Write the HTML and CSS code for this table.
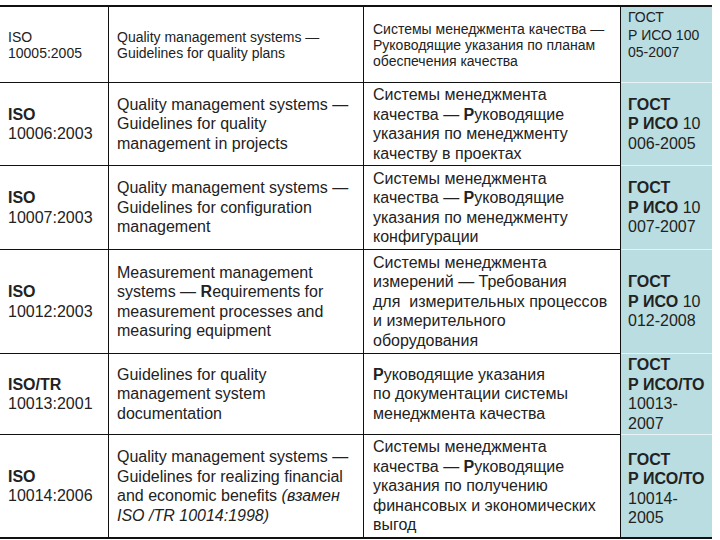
FILE: index.html
```html
<!DOCTYPE html>
<html>
<head>
<meta charset="utf-8">
<link rel="stylesheet" href="styles.css">
</head>
<body>
<table class="std">
  <colgroup>
    <col class="c1"><col class="c2"><col class="c3"><col class="c4">
  </colgroup>
  <tr class="r1 small">
    <td>ISO<br>10005:2005</td>
    <td>Quality management systems —<br>Guidelines for quality plans</td>
    <td>Системы менеджмента качества —<br>Руководящие указания по планам<br>обеспечения качества</td>
    <td class="gost gost-top">ГОСТ<br>Р ИСО 100<br>05-2007</td>
  </tr>
  <tr class="r2">
    <td><b>ISO</b><br>10006:2003</td>
    <td>Quality management systems —<br>Guidelines for quality<br>management in projects</td>
    <td>Системы менеджмента<br>качества — <b>Р</b>уководящие<br>указания по менеджменту<br>качеству в проектах</td>
    <td class="gost"><b>ГОСТ</b><br><b>Р ИСО</b> 10<br>006-2005</td>
  </tr>
  <tr class="r3">
    <td><b>ISO</b><br>10007:2003</td>
    <td>Quality management systems —<br>Guidelines for configuration<br>management</td>
    <td>Системы менеджмента<br>качества — <b>Р</b>уководящие<br>указания по менеджменту<br>конфигурации</td>
    <td class="gost"><b>ГОСТ</b><br><b>Р ИСО</b> 10<br>007-2007</td>
  </tr>
  <tr class="r4">
    <td><b>ISO</b><br>10012:2003</td>
    <td>Measurement management<br>systems — <b>R</b>equirements for<br>measurement processes and<br>measuring equipment</td>
    <td>Системы менеджмента<br>измерений — Требования<br>для&nbsp; измерительных процессов<br>и измерительного<br>оборудования</td>
    <td class="gost"><b>ГОСТ</b><br><b>Р ИСО</b> 10<br>012-2008</td>
  </tr>
  <tr class="r5">
    <td><b>ISO/TR</b><br>10013:2001</td>
    <td>Guidelines for quality<br>management system<br>documentation</td>
    <td><b>Р</b>уководящие указания<br>по документации системы<br>менеджмента качества</td>
    <td class="gost"><b>ГОСТ</b><br><b>Р ИСО/ТО</b><br>10013-<br>2007</td>
  </tr>
  <tr class="r6 last">
    <td><b>ISO</b><br>10014:2006</td>
    <td>Quality management systems —<br>Guidelines for realizing financial<br>and economic benefits <i>(взамен</i><br><i>ISO /TR 10014:1998)</i></td>
    <td>Системы менеджмента<br>качества — <b>Р</b>уководящие<br>указания по получению<br>финансовых и экономических<br>выгод</td>
    <td class="gost gost-low"><b>ГОСТ</b><br><b>Р ИСО/ТО</b><br>10014-<br>2005</td>
  </tr>
</table>
</body>
</html>
```

FILE: styles.css
```css
html, body {
  margin: 0;
  padding: 0;
  background: #ffffff;
}

body {
  padding-top: 5px;
  font-family: "Liberation Sans", Arial, sans-serif;
  color: #222222;
}

.std {
  width: 712px;
  table-layout: fixed;
  border-collapse: separate;
  border-spacing: 0;
  border-top: 2px solid #111111;
}

.c1 { width: 109px; }
.c2 { width: 255px; }
.c3 { width: 257px; }
.c4 { width: 91px; }

.std td {
  padding: 0 7px 0 8px;
  vertical-align: middle;
  white-space: nowrap;
  font-size: 16px;
  line-height: 19.5px;
  border-right: 1px solid #111111;
  border-bottom: 1px solid #111111;
  overflow: hidden;
}

.std td:nth-child(3) {
  padding-left: 9px;
}

.std td.gost {
  border-right: none;
  background: #b9dde1;
  padding-left: 7px;
  padding-right: 0;
  border-bottom-color: #e6f2f3;
}

.small td {
  font-size: 14px;
  line-height: 16px;
}

.std td.gost-top {
  vertical-align: top;
  padding-top: 2px;
  line-height: 17.5px;
}

.std td.gost-low {
  padding-top: 5px;
}

.last td {
  border-bottom: 2px solid #111111;
}

.last td.gost {
  border-bottom-color: #111111;
}

.std b {
  font-weight: bold;
}

.r1 { height: 76px; }
.r2 { height: 83px; }
.r3 { height: 84px; }
.r4 { height: 104px; }
.r5 { height: 81px; }
.r6 { height: 104px; }
```
